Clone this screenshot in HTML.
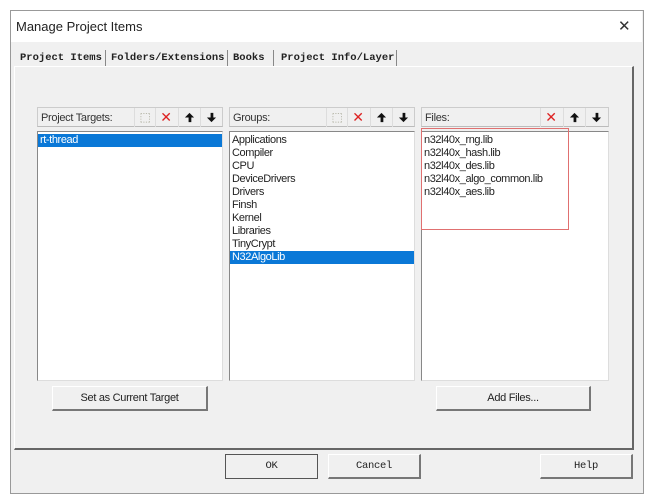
<!DOCTYPE html>
<html><head><style>
body{margin:0;width:659px;height:493px;background:#fff;position:relative;overflow:hidden;font-family:"Liberation Sans",Arial,sans-serif}
.a{position:absolute}
.win{left:10px;top:10px;width:632px;height:482px;background:#f0f0f0;border:1px solid #999}
.title{left:11px;top:11px;width:631px;height:31px;background:#fff}
.tab{font-family:"Liberation Mono",monospace;font-size:10.5px;color:#222;top:52px;font-weight:bold}
.panel{left:14px;top:66px;width:617px;height:381px;border:1px solid #fff;border-right:2px solid #666;border-bottom:2px solid #666}
.hdr{height:20px;border:1px solid #ccc;border-bottom-color:#bbb;font-size:11px;color:#333;line-height:20px;padding-left:3px;box-sizing:border-box;letter-spacing:-0.3px}
.list{background:#fff;border:1px solid #888;border-right-color:#ddd;border-bottom-color:#ddd;box-sizing:border-box;font-size:11px;line-height:13px;letter-spacing:-0.4px;color:#222;padding-top:2px}
.list div{padding-left:2px}
.sel{background:#0a78d7;color:#fff}
.ib{width:20px;height:19px;top:0;border-left:1px solid #ddd;text-align:center;font-size:14px;line-height:19px}
.btn{background:#f0f0f0;border:1px solid #fff;border-right:2px solid #777;border-bottom:2px solid #777;box-sizing:border-box;text-align:center;font-size:11px;color:#222;letter-spacing:-0.3px}
.mb{font-family:"Liberation Mono",monospace;font-size:10.5px}
</style></head><body>
<div class="a win"></div>
<div class="a title"></div>
<div class="a" style="left:16px;top:19px;font-size:13px;color:#222">Manage Project Items</div>
<div class="a" style="left:618px;top:17px;font-size:15px;color:#333">✕</div>
<div class="a tab" style="left:20px">Project Items</div>
<div class="a" style="left:105px;top:50px;width:1px;height:16px;background:#888"></div>
<div class="a tab" style="left:111px">Folders/Extensions</div>
<div class="a" style="left:227px;top:50px;width:1px;height:16px;background:#888"></div>
<div class="a tab" style="left:233px">Books</div>
<div class="a" style="left:273px;top:50px;width:1px;height:16px;background:#888"></div>
<div class="a tab" style="left:281px">Project Info/Layer</div>
<div class="a" style="left:396px;top:50px;width:1px;height:16px;background:#888"></div>
<div class="a panel"></div>

<svg width="0" height="0" style="position:absolute"><defs>
<symbol id="up" viewBox="0 0 12 12"><path d="M6 1 L11 6 L8 6 L8 11 L5 11 L5 6 L1 6 Z" fill="#111"/></symbol>
<symbol id="dn" viewBox="0 0 12 12"><path d="M6 11 L11 6 L8 6 L8 1 L5 1 L5 6 L1 6 Z" fill="#111"/></symbol>
</defs></svg>

<!-- Targets -->
<div class="a hdr" style="left:37px;top:107px;width:186px">Project Targets:
 <div class="a ib" style="left:96px;color:#aa9;font-size:12px">⬚</div>
 <div class="a ib" style="left:117px;color:#d22">✕</div>
 <div class="a ib" style="left:140px"><svg width="11" height="11" style="margin-top:4px"><use href="#up"/></svg></div>
 <div class="a ib" style="left:162px"><svg width="11" height="11" style="margin-top:4px"><use href="#dn"/></svg></div>
</div>
<div class="a list" style="left:37px;top:131px;width:186px;height:250px"><div class="sel">rt-thread</div></div>

<!-- Groups -->
<div class="a hdr" style="left:229px;top:107px;width:186px">Groups:
 <div class="a ib" style="left:96px;color:#aa9;font-size:12px">⬚</div>
 <div class="a ib" style="left:117px;color:#d22">✕</div>
 <div class="a ib" style="left:140px"><svg width="11" height="11" style="margin-top:4px"><use href="#up"/></svg></div>
 <div class="a ib" style="left:162px"><svg width="11" height="11" style="margin-top:4px"><use href="#dn"/></svg></div>
</div>
<div class="a list" style="left:229px;top:131px;width:186px;height:250px">
<div>Applications</div><div>Compiler</div><div>CPU</div><div>DeviceDrivers</div><div>Drivers</div><div>Finsh</div><div>Kernel</div><div>Libraries</div><div>TinyCrypt</div><div class="sel">N32AlgoLib</div></div>

<!-- Files -->
<div class="a hdr" style="left:421px;top:107px;width:188px">Files:
 <div class="a ib" style="left:118px;color:#d22">✕</div>
 <div class="a ib" style="left:141px"><svg width="11" height="11" style="margin-top:4px"><use href="#up"/></svg></div>
 <div class="a ib" style="left:163px"><svg width="11" height="11" style="margin-top:4px"><use href="#dn"/></svg></div>
</div>
<div class="a list" style="left:421px;top:131px;width:188px;height:250px">
<div>n32l40x_rng.lib</div><div>n32l40x_hash.lib</div><div>n32l40x_des.lib</div><div>n32l40x_algo_common.lib</div><div>n32l40x_aes.lib</div></div>
<div class="a" style="left:421px;top:128px;width:146px;height:100px;border:1px solid #e07070"></div>

<div class="a btn" style="left:52px;top:386px;width:156px;height:25px;line-height:23px">Set as Current Target</div>
<div class="a btn" style="left:436px;top:386px;width:155px;height:25px;line-height:23px">Add Files...</div>

<div class="a btn mb" style="left:225px;top:454px;width:93px;height:25px;line-height:23px;border:1px solid #555">OK</div>
<div class="a btn mb" style="left:328px;top:454px;width:93px;height:25px;line-height:23px">Cancel</div>
<div class="a btn mb" style="left:540px;top:454px;width:93px;height:25px;line-height:23px">Help</div>
</body></html>
